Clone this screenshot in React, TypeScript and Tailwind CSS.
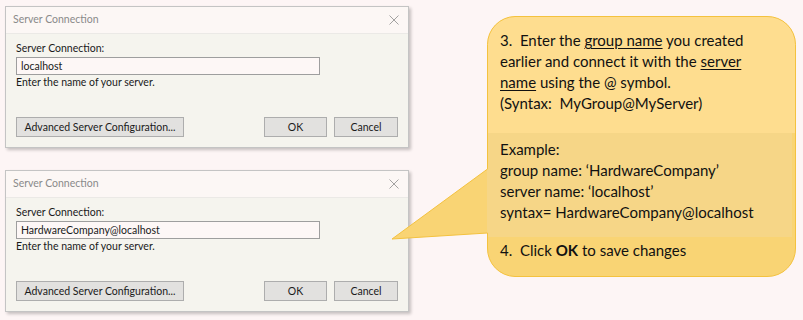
const dlgFont = { fontFamily: 'Lato, "Noto Sans", sans-serif' };
const noteFont = { fontFamily: 'Lato, "Open Sans", sans-serif' };

function Dialog({ value }: { value: string }) {
  return (
    <div
      className="w-[404px] h-[142px] flex flex-col border border-[#c4c4c4] bg-[#f5f4ee] shadow-[2px_2px_3px_rgba(0,0,0,0.22)]"
      style={dlgFont}
    >
      <div className="h-[27px] shrink-0 flex items-center justify-between pl-[7px] pr-[9px] bg-[#fcf7f5] border-b border-[#ebe9e6]">
        <span className="text-[10.5px] text-[#8a8a8a]">Server Connection</span>
        <svg viewBox="0 0 10 10" className="w-[10px] h-[10px]" stroke="#8c8c8c" strokeWidth="0.8" fill="none">
          <path d="M0.5 0.5 L9.5 9.5 M9.5 0.5 L0.5 9.5" />
        </svg>
      </div>
      <div className="flex-1 flex flex-col px-[10px] pt-[7px] pb-[10px] text-[10.5px] text-[#1a1a1a]">
        <div className="leading-[14px]">Server Connection:</div>
        <div className="mt-[2px] h-[18px] w-[304px] border border-[#9e9e9e] bg-[#fdf7f6] flex items-center pl-[4px] leading-none">
          {value}
        </div>
        <div className="leading-[14px]">Enter the name of your server.</div>
        <div className="mt-auto flex items-center">
          <button className="h-[20px] w-[168px] border border-[#adadad] bg-[#e2e1df] text-[10.5px] leading-none">
            Advanced Server Configuration...
          </button>
          <button className="ml-auto h-[20px] w-[63px] border border-[#adadad] bg-[#e2e1df] text-[10.5px] leading-none">
            OK
          </button>
          <button className="ml-[7px] h-[20px] w-[64px] border border-[#adadad] bg-[#e2e1df] text-[10.5px] leading-none">
            Cancel
          </button>
        </div>
      </div>
    </div>
  );
}

function Bubble() {
  // box 309x261, tail sticks out 96px on the left
  const shape =
    "M124 0.5 H376 A28 28 0 0 1 404.5 28.5 V232 A28 28 0 0 1 376 260.5 H124 A28 28 0 0 1 96.5 232 V217 L1 223 L96.5 153 V28.5 A28 28 0 0 1 124 0.5 Z";
  return (
    <svg className="absolute left-[-96px] top-0 w-[406px] h-[262px]" viewBox="0 0 406 262">
      <defs>
        <clipPath id="bub">
          <path d={shape} />
        </clipPath>
      </defs>
      <g clipPath="url(#bub)">
        <rect x="0" y="0" width="406" height="262" fill="#f9d474" />
        <rect x="96" y="0" width="310" height="117" fill="#fedd8f" />
        <rect x="96" y="117" width="305" height="104" fill="#f6d687" />
      </g>
      <path d={shape} fill="none" stroke="#f4c23f" strokeWidth="1" />
    </svg>
  );
}

export default function App() {
  return (
    <div className="w-[803px] h-[320px] bg-[#fdf5f5] flex items-start overflow-hidden">
      <div className="flex flex-col gap-[22px] pl-[5px] pt-[6px]">
        <Dialog value="localhost" />
        <Dialog value="HardwareCompany@localhost" />
      </div>
      <div className="relative z-10 ml-[78px] mt-[16px] w-[309px] h-[261px]">
        <Bubble />
        <div
          className="relative pl-[13px] pt-[14px] text-[15px] leading-[21px] text-[#111] whitespace-nowrap"
          style={noteFont}
        >
          <p>
            3.&nbsp; Enter the <span className="underline underline-offset-2">group name</span> you created
            <br />
            earlier and connect it with the <span className="underline underline-offset-2">server</span>
            <br />
            <span className="underline underline-offset-2">name</span> using the @ symbol.
            <br />
            (Syntax:&nbsp; MyGroup@MyServer)
          </p>
          <p className="mt-[25px]">
            Example:
            <br />
            group name: ‘HardwareCompany’
            <br />
            server name: ‘localhost’
            <br />
            syntax= HardwareCompany@localhost
          </p>
          <p className="mt-[17px]">
            4.&nbsp; Click <b>OK</b> to save changes
          </p>
        </div>
      </div>
    </div>
  );
}
